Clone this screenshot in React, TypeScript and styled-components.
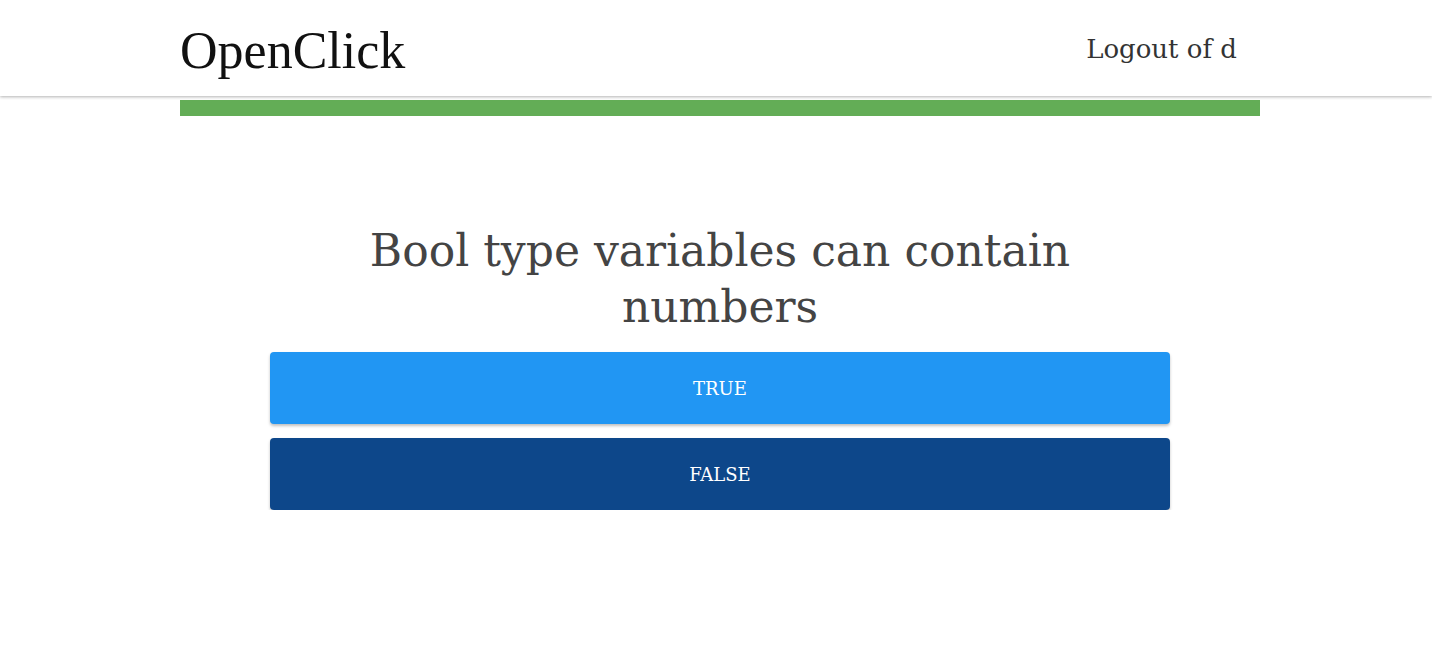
import styled, { createGlobalStyle } from 'styled-components'

const GlobalStyle = createGlobalStyle`
  body {
    margin: 0;
    background: #fff;
    font-family: 'DejaVu Serif', serif;
  }
`

const answers = [
  { label: 'TRUE', tone: 'light' as const },
  { label: 'FALSE', tone: 'dark' as const },
]

const App = () => {
  return (
    <>
      <GlobalStyle />
      <Header>
        <HeaderInner>
          <Logo>OpenClick</Logo>
          <LogoutLink href="#">Logout of d</LogoutLink>
        </HeaderInner>
      </Header>
      <Container>
        <Progress />
        <Question>
          <Title>Bool type variables can contain numbers</Title>
          {answers.map((a) => (
            <AnswerButton key={a.label} tone={a.tone}>
              {a.label}
            </AnswerButton>
          ))}
        </Question>
      </Container>
    </>
  )
}

export default App

const Header = styled.header`
  height: 96px;
  background: #fff;
  box-shadow: 0 1px 3px rgba(0, 0, 0, 0.3);
  position: relative;
  z-index: 1;
  padding-left: 8px;
`
const HeaderInner = styled.div`
  width: 1080px;
  margin: 0 auto;
  height: 100%;
  display: flex;
  align-items: center;
  justify-content: space-between;
`
const Logo = styled.div`
  font-family: 'Liberation Serif', serif;
  font-size: 52px;
  color: #111;
  margin-top: 4px;
`
const LogoutLink = styled.a`
  font-size: 26px;
  color: #333;
  text-decoration: none;
  margin-right: 23px;
  margin-top: 2px;
`
const Container = styled.main`
  padding: 4px 0 0 8px;
`
const Inner = styled.div`
  width: 1080px;
  margin: 0 auto;
`
const Progress = styled(Inner)`
  height: 16px;
  background: #63ad56;
`
const Question = styled.section`
  width: 900px;
  margin: 0 auto;
  padding-top: 107px;
  display: flex;
  flex-direction: column;
  gap: 14px;
`
const Title = styled.h1`
  margin: 0 0 3px;
  font-weight: 400;
  font-size: 44px;
  line-height: 56px;
  color: #444;
  text-align: center;
`
interface ToneProps {
  tone: 'light' | 'dark'
}
const AnswerButton = styled.button<ToneProps>`
  height: 72px;
  border: 0;
  border-radius: 4px;
  background: ${(p) => (p.tone === 'light' ? '#2196f3' : '#0d478a')};
  color: #fff;
  font-family: 'DejaVu Serif', serif;
  font-size: 18px;
  box-shadow: 0 2px 3px rgba(0, 0, 0, 0.25);
  cursor: pointer;
`
